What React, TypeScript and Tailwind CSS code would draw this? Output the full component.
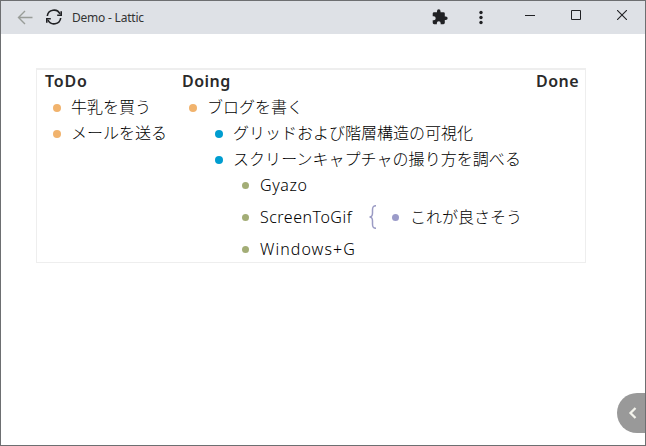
import React from "react";

const dotColors = {
  orange: "mr-[10px] size-2 bg-[#f1b36d]",
  blue: "mr-[10px] size-2 bg-[#009dd0]",
  green: "mr-[11px] size-[7px] bg-[#a3ad76]",
  purple: "mr-[11px] size-[7px] bg-[#9b9bc9]",
};

function Item({
  color,
  className = "",
  textClass = "",
  children,
}: {
  color: keyof typeof dotColors;
  className?: string;
  textClass?: string;
  children: React.ReactNode;
}) {
  return (
    <div className={`flex h-[26px] items-center font-light whitespace-nowrap text-black ${className}`}>
      <span className={`mt-px shrink-0 rounded-full ${dotColors[color]}`} />
      <span className={textClass}>{children}</span>
    </div>
  );
}

function TitleBar() {
  return (
    <header className="flex h-[33px] shrink-0 items-center bg-[#dee1e6] text-[#202124]">
      <svg className="mb-0.5 ml-4 h-4 w-4 shrink-0 text-[#999d99]" viewBox="0 0 16 16" fill="none" stroke="currentColor" strokeWidth="1.4">
        <path d="M15.500 8.500H1.500M8 2 1.500 8.500 8 15" />
      </svg>
      <svg className="mb-0.5 ml-3 h-[18px] w-[18px] shrink-0" viewBox="0 0 18 18" fill="none" stroke="currentColor" strokeWidth="1.6">
        <path d="M2.300 8A6.700 6.700 0 0 1 15 6M15.700 10A6.700 6.700 0 0 1 3 12" />
        <path d="M16.200 3.300v4h-4M1.800 14.700v-4h4" />
      </svg>
      <span className="ml-[9px] w-[90px] whitespace-nowrap text-[12px] tracking-[-0.22px] text-[#333]">Demo - Lattic</span>
      <div className="flex-1" />
      <svg className="mr-[31px] mb-px h-4 w-4 shrink-0" viewBox="1.5 0.5 21.5 22.5" fill="currentColor">
        <path d="M20.500 11H19V7a2 2 0 0 0-2-2h-4V3.500a2.500 2.500 0 0 0-5 0V5H4a2 2 0 0 0-1.990 2v3.800H3.500a2.700 2.700 0 0 1 0 5.400H2V20a2 2 0 0 0 2 2h3.800v-1.500a2.700 2.700 0 0 1 5.400 0V22H17a2 2 0 0 0 2-2v-4h1.500a2.500 2.500 0 0 0 0-5z" />
      </svg>
      <svg className="mr-[42px] h-[15px] w-1 shrink-0" viewBox="0 0 4 15" fill="currentColor">
        <circle cx="2" cy="2.500" r="1.700" />
        <circle cx="2" cy="7.500" r="1.700" />
        <circle cx="2" cy="12.500" r="1.700" />
      </svg>
      <svg className="mr-9 mb-[5px] h-[10px] w-[10px] shrink-0" viewBox="0 0 10 10">
        <path d="M0 5.500h10" stroke="currentColor" />
      </svg>
      <svg className="mr-9 mb-[5px] h-[10px] w-[10px] shrink-0" viewBox="0 0 10 10">
        <path d="M.5.5h9v9h-9z" fill="none" stroke="currentColor" />
      </svg>
      <svg className="mr-[18px] mb-[5px] h-[10px] w-[10px] shrink-0" viewBox="0 0 10 10">
        <path d="m0 0 10 10M10 0 0 10" stroke="currentColor" strokeWidth="1.1" />
      </svg>
    </header>
  );
}

export default function App() {
  return (
    <div className="flex h-[446px] w-[646px] flex-col border border-[#6d6f71] bg-white font-['Noto_Sans','Noto_Sans_CJK_JP',sans-serif] text-[#2a2a2a]">
      <TitleBar />
      <main className="relative flex-1 pt-[34px] pl-[35px]">
        <section className="flex h-[195px] w-[550px] border border-t-2 border-[#eee] text-[16px] leading-[26px]">
          <div className="w-[137px] pl-2">
            <h2 className="h-[24px] leading-[22px] font-semibold tracking-[0.85px]">ToDo</h2>
            <Item color="orange" className="pl-2">牛乳を買う</Item>
            <Item color="orange" className="pl-2">メールを送る</Item>
          </div>
          <div className="w-[354px] pl-2">
            <h2 className="h-[24px] leading-[22px] font-semibold tracking-[0.5px]">Doing</h2>
            <Item color="orange" className="pl-[7px]">ブログを書く</Item>
            <Item color="blue" className="pl-[33px]">グリッドおよび階層構造の可視化</Item>
            <Item color="blue" className="pl-[33px]" textClass="tracking-[0.05px]">スクリーンキャプチャの撮り方を調べる</Item>
            <Item color="green" className="pl-[60px]" textClass="tracking-[0.6px]">Gyazo</Item>
            <div className="flex h-[38px] items-center">
              <Item color="green" className="w-[187px] pl-[60px]" textClass="tracking-[0.5px]">ScreenToGif</Item>
              <svg className="h-6 w-2 shrink-0" viewBox="0 0 8 24" fill="none" stroke="#9b9bc4" strokeWidth="1.5">
                <path d="M7 .7C4 .7 3.500 2 3.500 5v3c0 2.500-.7 4-3 4 2.300 0 3 1.500 3 4v3c0 3 .5 4.300 3.500 4.300" />
              </svg>
              <Item color="purple" className="pl-[15px]">これが良さそう</Item>
            </div>
            <Item color="green" className="pl-[60px]" textClass="tracking-[1.05px]">Windows+G</Item>
          </div>
          <div className="pl-2">
            <h2 className="h-[24px] leading-[22px] font-semibold tracking-[0.5px]">Done</h2>
          </div>
        </section>
        <button className="absolute right-0 bottom-[12px] flex h-10 w-7 items-center rounded-l-full bg-[#999] pl-[11px]" aria-label="Open panel">
          <svg className="h-[14px] w-[10px]" viewBox="0 0 10 14" fill="none" stroke="#f3f3ec" strokeWidth="2.300">
            <path d="M7.500 2 2.500 7l5 5" />
          </svg>
        </button>
      </main>
    </div>
  );
}
